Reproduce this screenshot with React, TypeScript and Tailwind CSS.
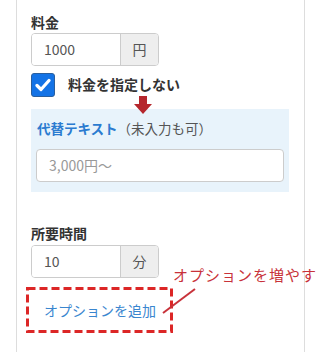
const font = { fontFamily: '"Noto Sans CJK JP", "Noto Sans", sans-serif' };

const InputGroup = ({ value, unit }: { value: string; unit: string }) => (
  <div className="flex h-[33px] w-[128px] rounded-[4px] border border-[#ccc] overflow-hidden">
    <div className="flex-1 flex items-center pl-[12px] text-[14px] text-[#555] bg-white">{value}</div>
    <div className="w-[38px] flex items-center justify-center border-l border-[#ccc] bg-[#eee] text-[14px] text-[#555]">
      {unit}
    </div>
  </div>
);

export default function App() {
  return (
    <div className="relative w-[320px] h-[352px] bg-white overflow-hidden" style={font}>
      <div className="ml-[16px] w-[289px] h-full border-x border-[#ddd] pl-[14px] pt-[12px]">
        <div className="text-[14px] font-bold text-[#333] leading-[20px] mb-[1px]">料金</div>
        <InputGroup value="1000" unit="円" />

        <div className="flex items-center mt-[6px] h-[25px]">
          <div className="w-[24px] h-[24px] rounded-[3px] bg-[#1473e6] border border-[#2a5f9e] flex items-center justify-center">
            <svg width="16" height="14" viewBox="0 0 16 14">
              <path d="M2 7.5 L6 11.5 L14 2.5" fill="none" stroke="white" strokeWidth="3.2" strokeLinecap="round" strokeLinejoin="round" />
            </svg>
          </div>
          <span className="ml-[13px] text-[14px] font-bold text-[#333]">料金を指定しない</span>
        </div>

        <div className="relative mt-[12px] w-[258px] bg-[#e8f3fb] px-[5px] pt-[9px] pb-[10px]">
          <svg className="absolute left-[103px] top-[-13px]" width="18" height="18" viewBox="0 0 18 18">
            <path d="M5 0 H13 V8 H18 L9 18 L0 8 H5 Z" fill="#b5272d" />
          </svg>
          <div className="text-[13.5px] leading-[20px] pl-[1px] whitespace-nowrap">
            <span className="font-bold text-[#2b7bd0]">代替テキスト</span>
            <span className="text-[#555]">（未入力も可）</span>
          </div>
          <div className="mt-[11px] h-[33px] w-[248px] rounded-[4px] border border-[#ccc] bg-white flex items-center pl-[12px] text-[14px] text-[#999]">
            3,000円〜
          </div>
        </div>

        <div className="mt-[31px] text-[14px] font-bold text-[#333] leading-[20px] mb-[2px]">所要時間</div>
        <InputGroup value="10" unit="分" />

        <div className="relative mt-[9px] -ml-[5px] w-[147px] h-[46px] flex items-center pl-[18px] text-[14px] text-[#3a86cf] whitespace-nowrap">
          <svg className="absolute inset-0 pointer-events-none" width="147" height="46">
            <rect x="1.5" y="1.5" width="144" height="43" fill="none" stroke="#dc2626" strokeWidth="3" strokeDasharray="8 4" />
          </svg>
          オプションを追加
        </div>
      </div>

      <div className="absolute left-[173px] top-[265px] text-[15px] leading-[20px] tracking-[1px] text-[#c8323a] whitespace-nowrap">
        オプションを増やす
      </div>
      <svg className="absolute left-0 top-0 pointer-events-none" width="320" height="352">
        <line x1="195" y1="289" x2="163" y2="313" stroke="#c8323a" strokeWidth="2" />
      </svg>
    </div>
  );
}
